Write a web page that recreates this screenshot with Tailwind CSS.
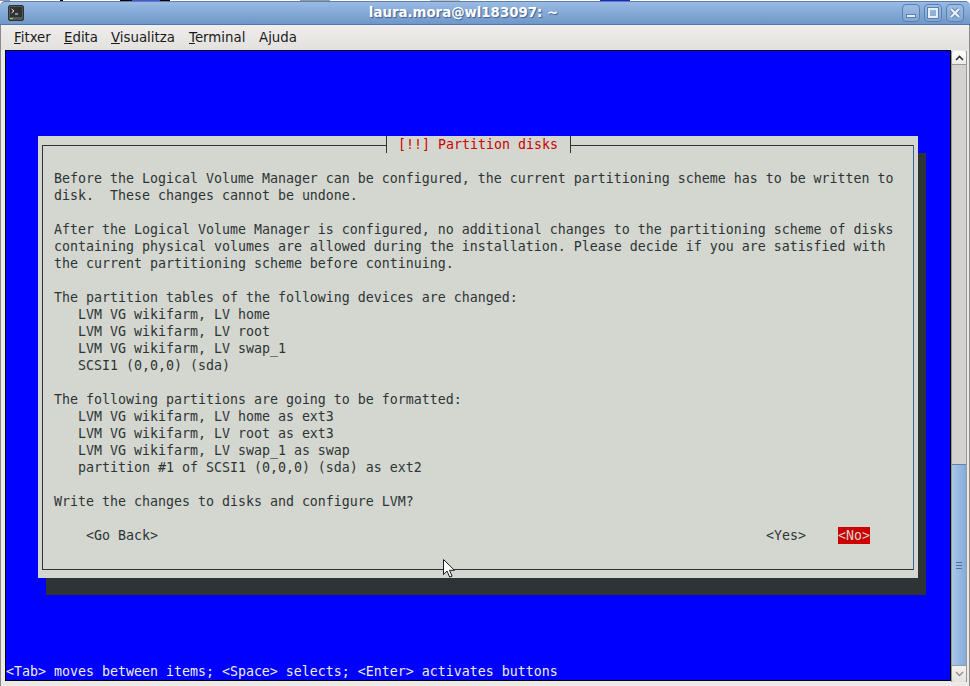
<!DOCTYPE html>
<html lang="en">
<head>
    <meta charset="UTF-8">
    <title>laura.mora@wl183097: ~</title>
    <script src="https://cdn.jsdelivr.net/npm/@tailwindcss/browser@4"></script>
</head>
<body class="bg-white">
    <div class="relative w-[970px] h-[686px] overflow-hidden flex flex-col font-['DejaVu_Sans',sans-serif]">
        <!-- desktop peeking out above the window -->
        <div class="h-[1px] flex shrink-0 bg-white">
            <div class="w-[10px] bg-[#8a94b0]"></div>
            <div class="w-[50px]"></div>
            <div class="w-[3px] bg-black"></div>
            <div class="w-[57px]"></div>
            <div class="w-[12px] bg-black"></div>
            <div class="w-[28px] bg-[#4a58d8]"></div>
            <div class="w-[10px] bg-black"></div>
            <div class="w-[130px]"></div>
            <div class="w-[30px] bg-[#9a9a9a]"></div>
            <div class="w-[100px]"></div>
            <div class="w-[30px] bg-[#c4c4c4]"></div>
            <div class="w-[140px]"></div>
            <div class="w-[30px] bg-[#2020d0]"></div>
            <div class="flex-1"></div>
        </div>

        <!-- title bar -->
        <div class="h-[24px] shrink-0 flex items-center rounded-t-[5px] border-t border-[#5d7fae] border-b-[#4f79aa] border-b bg-gradient-to-b from-[#99bbe3] to-[#7097c9] pl-[8px] pr-[6px]">
            <svg width="16" height="16" viewBox="0 0 16 16" class="shrink-0">
                <rect x="0.5" y="0.5" width="15" height="15" rx="1.5" fill="#555753" stroke="#2e3436"/>
                <rect x="2" y="2" width="12" height="10" fill="#2e3436"/>
                <path d="M3.5 4l2.5 2-2.5 2" fill="none" stroke="#eeeeec" stroke-width="1"/>
                <path d="M7 9h3" stroke="#eeeeec"/>
                <path d="M2 13.5h3" stroke="#8ae234"/>
            </svg>
            <div class="flex-1 text-center text-[13.33px] font-bold text-white [text-shadow:1px_1px_1px_#3d5f8f] pl-[1px] pb-[1px]">laura.mora@wl183097: ~</div>
            <div class="flex gap-[4px] shrink-0">
                <div class="w-[18px] h-[18px] rounded-[4px] border border-[#5a80b2] bg-white/10 flex items-center justify-center">
                    <svg width="12" height="12" viewBox="0 0 12 12"><rect x="1.5" y="7.5" width="9" height="3" fill="#e6eef8" stroke="#5a80b2"/></svg>
                </div>
                <div class="w-[18px] h-[18px] rounded-[4px] border border-[#5a80b2] bg-white/10 flex items-center justify-center">
                    <svg width="12" height="12" viewBox="0 0 12 12"><rect x="2" y="2" width="8" height="8" fill="none" stroke="#e6eef8" stroke-width="2"/><rect x="0.5" y="0.5" width="11" height="11" fill="none" stroke="#5a80b2"/></svg>
                </div>
                <div class="w-[18px] h-[18px] rounded-[4px] border border-[#5a80b2] bg-white/10 flex items-center justify-center">
                    <svg width="12" height="12" viewBox="0 0 12 12"><path d="M2 2l8 8M10 2l-8 8" stroke="#5a80b2" stroke-width="4"/><path d="M2 2l8 8M10 2l-8 8" stroke="#eaf1fa" stroke-width="2.4"/></svg>
                </div>
            </div>
        </div>

        <!-- menu bar -->
        <div class="h-[25px] shrink-0 flex items-center bg-gradient-to-b from-[#efeeec] to-[#e2e1de] border-x border-[#8a8a88] pl-[13px] text-[13.33px] text-[#1a1a1a]">
            <span class="w-[50px]"><span class="underline">F</span>itxer</span>
            <span class="w-[47px]"><span class="underline">E</span>dita</span>
            <span class="w-[78px]"><span class="underline">V</span>isualitza</span>
            <span class="w-[70px]"><span class="underline">T</span>erminal</span>
            <span>A<span class="underline">j</span>uda</span>
        </div>

        <!-- terminal + scrollbar -->
        <div class="flex-1 flex bg-[#eceae8] border-x border-[#8a8a88] pl-[4px] pr-[2px]">
            <div class="w-[946px] h-[631px] shrink-0 border border-black bg-[#0000ff] flex flex-col font-['DejaVu_Sans_Mono',monospace] text-[13.29px] leading-[17px] text-[#2e3436]">
                <div class="ml-[32px] mt-[85px] w-[880px] h-[442px] bg-[#d3d7cf] shadow-[8px_17px_0_#2e3436] pt-[9px] px-[4px] relative">
                    <div class="absolute left-[348px] top-0 w-[185px] h-[17px] bg-[#d3d7cf] border-x border-[#2e3436] pl-[11px] text-[#cc0000] whitespace-pre">[!!] Partition disks</div>
                    <div class="h-[425px] border border-[#2e3436] border-r-[#3c5f96] pt-[24px] pl-[11px]">
<pre class="font-['DejaVu_Sans_Mono',monospace]">Before the Logical Volume Manager can be configured, the current partitioning scheme has to be written to
disk.  These changes cannot be undone.

After the Logical Volume Manager is configured, no additional changes to the partitioning scheme of disks
containing physical volumes are allowed during the installation. Please decide if you are satisfied with
the current partitioning scheme before continuing.

The partition tables of the following devices are changed:
   LVM VG wikifarm, LV home
   LVM VG wikifarm, LV root
   LVM VG wikifarm, LV swap_1
   SCSI1 (0,0,0) (sda)

The following partitions are going to be formatted:
   LVM VG wikifarm, LV home as ext3
   LVM VG wikifarm, LV root as ext3
   LVM VG wikifarm, LV swap_1 as swap
   partition #1 of SCSI1 (0,0,0) (sda) as ext2

Write the changes to disks and configure LVM?</pre>
                        <div class="flex mt-[17px] pl-[32px] pr-[43px]">
                            <span>&lt;Go Back&gt;</span>
                            <span class="ml-auto">&lt;Yes&gt;</span>
                            <span class="ml-[32px] bg-[#cc0000] text-[#d3d7cf]">&lt;No&gt;</span>
                        </div>
                    </div>
                </div>
                <div class="mt-auto text-[#eeeeec] whitespace-pre">&lt;Tab&gt; moves between items; &lt;Space&gt; selects; &lt;Enter&gt; activates buttons</div>
            </div>

            <div class="w-[16px] h-[631px] shrink-0 flex flex-col bg-[#d3d2d0] border-x border-[#9a9a98] mt-[1px]">
                <div class="h-[14px] shrink-0 bg-gradient-to-b from-white to-[#ecebe9] border-b border-[#9a9a98] rounded-t-[3px] flex items-center justify-center">
                    <svg width="9" height="6" viewBox="0 0 9 6"><path d="M1 5l3.5-3.5L8 5" fill="none" stroke="#2e3436" stroke-width="1.6"/></svg>
                </div>
                <div class="mt-auto h-[201px] shrink-0 bg-gradient-to-r from-[#a9c7ea] to-[#86aad8] border-t border-[#5f84b5] flex flex-col items-center justify-center gap-[2px]">
                    <div class="w-[6px] h-[1px] bg-[#4f6f9e]"></div>
                    <div class="w-[6px] h-[1px] bg-[#4f6f9e]"></div>
                    <div class="w-[6px] h-[1px] bg-[#4f6f9e]"></div>
                </div>
                <div class="h-[17px] shrink-0 bg-gradient-to-b from-[#f2f1ef] to-[#e4e3e0] border-t border-[#9a9a98] rounded-b-[3px] flex items-center justify-center">
                    <svg width="9" height="6" viewBox="0 0 9 6"><path d="M1 1l3.5 3.5L8 1" fill="none" stroke="#8f8f8d" stroke-width="1.4"/></svg>
                </div>
            </div>
        </div>

        <!-- mouse pointer caught in the screenshot -->
        <svg class="absolute left-[442px] top-[558px]" width="16" height="22" viewBox="0 0 16 22">
            <path d="M1.5 1.5v15l3.6-3.4 2.6 6 2.4-1-2.6-5.8h5z" fill="#ffffff" stroke="#1a1a1a" stroke-width="1"/>
        </svg>
    </div>
</body>
</html>
